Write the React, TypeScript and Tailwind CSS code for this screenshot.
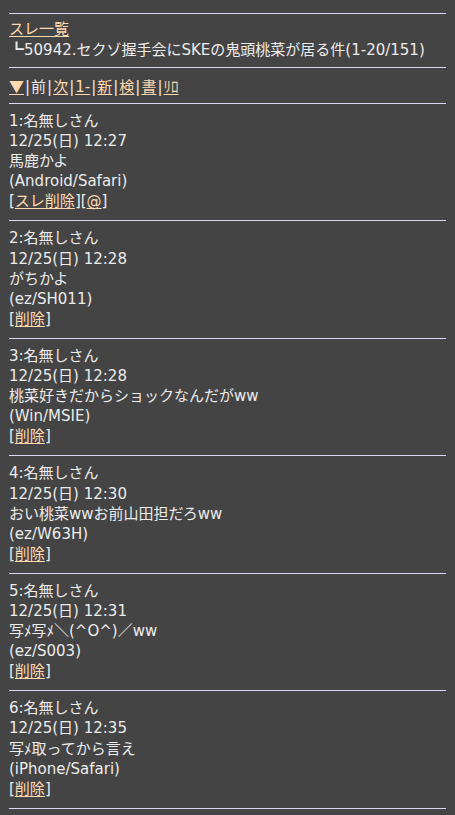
import React from 'react';

type Post = {
  no: number;
  date: string;
  body: string;
  ua: string;
  links: string[];
};

const posts: Post[] = [
  { no: 1, date: '12/25(日) 12:27', body: '馬鹿かよ', ua: '(Android/Safari)', links: ['スレ削除', '@'] },
  { no: 2, date: '12/25(日) 12:28', body: 'がちかよ', ua: '(ez/SH011)', links: ['削除'] },
  { no: 3, date: '12/25(日) 12:28', body: '桃菜好きだからショックなんだがww', ua: '(Win/MSIE)', links: ['削除'] },
  { no: 4, date: '12/25(日) 12:30', body: 'おい桃菜wwお前山田担だろww', ua: '(ez/W63H)', links: ['削除'] },
  { no: 5, date: '12/25(日) 12:31', body: '写ﾒ写ﾒ＼(^O^)／ww', ua: '(ez/S003)', links: ['削除'] },
  { no: 6, date: '12/25(日) 12:35', body: '写ﾒ取ってから言え', ua: '(iPhone/Safari)', links: ['削除'] },
];

const navItems: { label: string; link: boolean }[] = [
  { label: '▼', link: true },
  { label: '前', link: false },
  { label: '次', link: true },
  { label: '1-', link: true },
  { label: '新', link: true },
  { label: '検', link: true },
  { label: '書', link: true },
  { label: 'ﾘﾛ', link: true },
];

function A({ children, className }: { children: React.ReactNode; className?: string }) {
  return (
    <a className={`text-[#ffd9b0] underline underline-offset-2 cursor-pointer ${className ?? ''}`}>
      {children}
    </a>
  );
}

function Rule() {
  return <div className="h-px bg-[#d8d8f4]" />;
}

export default function App() {
  return (
    <div
      className="min-h-[815px] bg-[#444444] text-[#ececec] text-[15px] leading-[20px] px-[9px] pt-[13px]"
      style={{ fontFamily: '"DejaVu Sans", "Noto Sans CJK JP", sans-serif' }}
    >
      <Rule />
      <div className="pt-[5px] pb-[8px]">
        <div className="h-5">
          <A>スレ一覧</A>
        </div>
        <div className="h-5 whitespace-nowrap">
          <span className="font-['Noto_Sans_CJK_JP',sans-serif]">┗</span>
          50942.セクゾ握手会にSKEの鬼頭桃菜が居る件(1-20/151)
        </div>
      </div>
      <Rule />
      <div className="h-[35px] pt-[8px] whitespace-nowrap">
        <div className="h-5">
          {navItems.map((n, i) => (
            <React.Fragment key={n.label}>
              {i > 0 && <span className="px-px">|</span>}
              {n.link ? (
                <A className={n.label === '▼' ? "font-['Noto_Sans_CJK_JP',sans-serif]" : ''}>{n.label}</A>
              ) : (
                <span>{n.label}</span>
              )}
            </React.Fragment>
          ))}
        </div>
      </div>
      <Rule />
      {posts.map((p) => (
        <React.Fragment key={p.no}>
          <div className="pt-[7px] pb-[9px] leading-[20.1px]">
            <div>{p.no}:名無しさん</div>
            <div>{p.date}</div>
            <div className="whitespace-nowrap">{p.body}</div>
            <div>{p.ua}</div>
            <div>
              {p.links.map((l) => (
                <span key={l}>
                  [<A>{l}</A>]
                </span>
              ))}
            </div>
          </div>
          <Rule />
        </React.Fragment>
      ))}
    </div>
  );
}
